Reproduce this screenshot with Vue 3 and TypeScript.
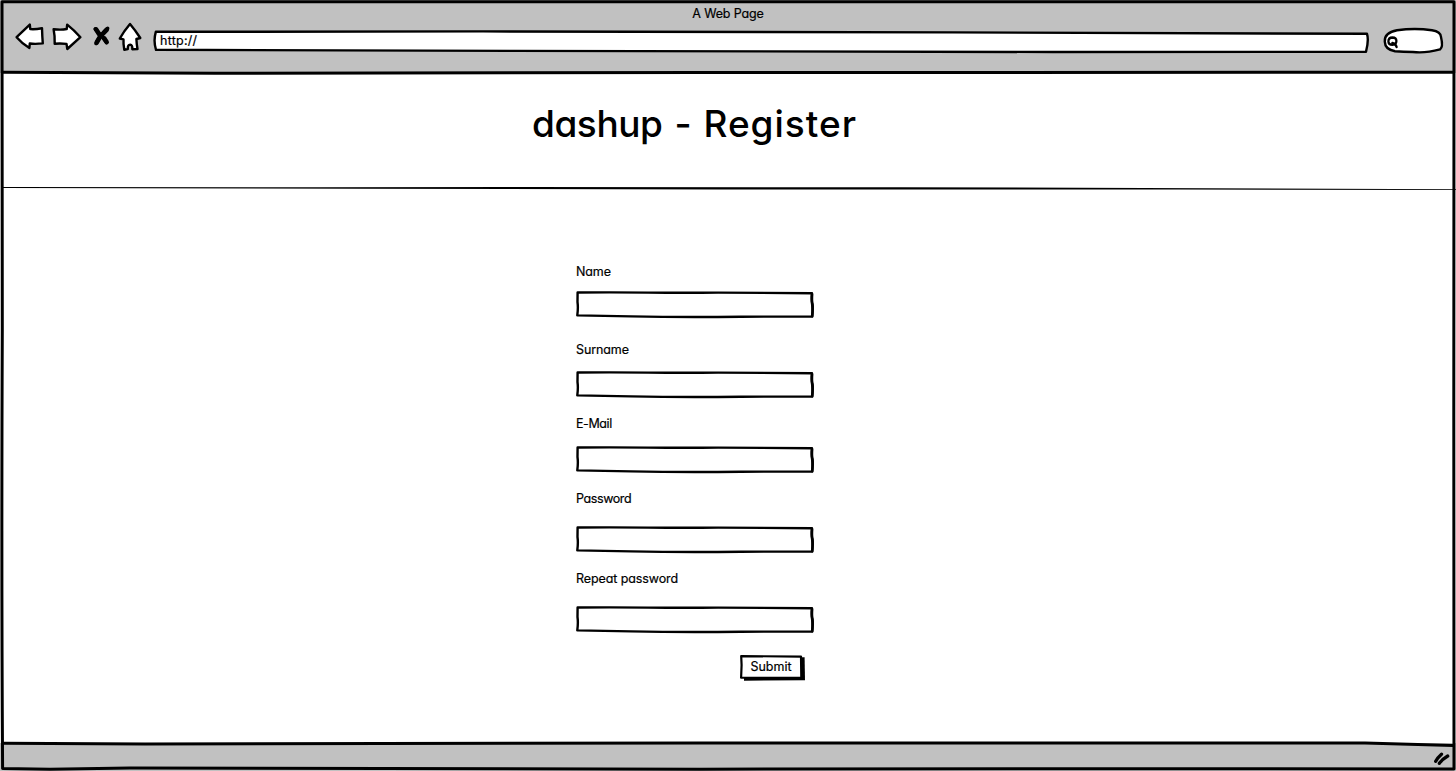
<script setup lang="ts">
interface Field {
  id: string
  label: string
  type: string
}

const fields: Field[] = [
  { id: 'name', label: 'Name', type: 'text' },
  { id: 'surname', label: 'Surname', type: 'text' },
  { id: 'email', label: 'E-Mail', type: 'email' },
  { id: 'password', label: 'Password', type: 'password' },
  { id: 'repeat', label: 'Repeat password', type: 'password' },
]
</script>

<template>
  <div class="window">
    <header class="chrome">
      <div class="title"><span>A Web Page</span></div>
      <nav class="toolbar">
        <svg class="icon back" width="30" height="28" viewBox="0 0 30 28">
          <path d="M1.6 14.2 L14.8 1.6 L15.3 6.1 Q20 6.6 27 5.2 Q27.2 13 27.8 20.4 Q20 21.2 14.8 20.5 L14.4 25 Q7 20.5 1.6 14.2 Z" />
        </svg>
        <svg class="icon forward" width="30" height="28" viewBox="0 0 30 28">
          <path d="M1.6 6.2 Q9 7.2 14.7 6 L15.2 1.6 Q22 7 28.4 14.2 L15.3 26 L14.5 20.9 Q8 20.3 2.7 20.8 Q3 13 1.6 6.2 Z" />
        </svg>
        <svg class="icon stop" width="20" height="22" viewBox="0 0 20 22">
          <path d="M3.2 4 Q8 9 14.8 17.6 M15.6 3.3 Q9 9 4 18.5" />
          <path class="thick" d="M4 4.3 L7 9 M14.8 4.6 L10.7 9 M7.3 13 L4.7 17.5 M12.2 13.3 L14.6 17" />
        </svg>
        <svg class="icon home" width="24" height="30" viewBox="0 0 24 30">
          <path d="M12 2 Q17.5 8.5 22.3 16 L18.4 17 Q18.6 22 19.5 27 L14.3 27.3 Q14.6 22.8 12.2 22.6 Q9.5 22.8 9.8 27 L6.3 27.8 Q5.2 22 5.5 17.3 L1.8 16.5 Q6 9 12 2 Z" />
        </svg>
        <div class="address">
          <svg class="sketch" width="1216" height="24" viewBox="0 0 1216 24">
            <path d="M2.8 1.8 L330 1.4 L800 2.4 L1214 3.8 Q1216 10 1213 21.8 L900 22 L360 20.9 L3 19.8 Q.2 11 2.8 1.8 Z" />
          </svg>
          <span>http://</span>
        </div>
        <div class="search">
          <svg width="62" height="27" viewBox="0 0 62 27">
            <path d="M1.8 14.6 Q1.2 5.6 14 3.3 Q32 .8 49 3.3 Q57.7 4.7 58 10 Q60.4 20 57 22.4 Q42 26.5 30 25 Q20 24.6 12 24.2 Q2 22.5 1.8 14.6 Z" />
            <path class="lens" d="M5.4 14.4 Q5.4 10.6 9.4 10.5 Q13.4 10.6 13.4 14 Q13.3 17.8 9.5 17.8 Q5.5 17.8 5.4 14.4 Z M9.4 15.8 Q12.9 16.6 13.6 20" />
          </svg>
        </div>
      </nav>
    </header>

    <section class="hero">
      <h1><span class="brand">dashup</span> - <span class="page">Register</span></h1>
    </section>

    <main class="content">
      <form class="form" @submit.prevent>
        <template v-for="field in fields" :key="field.id">
          <label :class="['label', field.id]" :for="field.id">{{ field.label }}</label>
          <div class="box">
            <svg class="sketch" width="240" height="28" viewBox="0 0 240 28">
              <path d="M1.6 1.5 Q40 1.2 72 1.6 Q110 2 142 1.6 L236 2.2 Q235.2 8 236.2 14 Q236.8 20 236.2 25.5 L165 25.7 Q108 26.4 55 25.4 L1.3 24.4 Q2.3 17 1.5 11 Z" />
              <path class="accent" d="M236.1 3.4 Q235.6 10 236.5 13 Q237 17 236.2 25.2" />
            </svg>
            <input :id="field.id" :type="field.type" />
          </div>
        </template>
        <button class="submit" type="submit">
          <svg class="sketch" width="66" height="27" viewBox="0 0 66 27">
            <path class="shadow" d="M4 3 L64.6 2.3 L65 25.2 L4 25.8 Z" />
            <path class="face" d="M1.2 1.1 L61 1.6 L61.3 22.8 L1.1 22.7 L1.6 10 Z" />
          </svg>
          <span>Submit</span>
        </button>
      </form>
    </main>

    <footer class="status">
      <svg width="20" height="16" viewBox="0 0 20 16">
        <path d="M2.7 11.3 Q4.7 7.5 8.5 4.2 M6.4 13.3 Q9.2 9.2 14.7 6" />
      </svg>
    </footer>

    <svg class="frame" width="1456" height="771" viewBox="0 0 1456 771">
      <path d="M2 1.8 L1454 1.8 Q1453.2 200 1453.8 420 L1454 769 L1100 768.7 L700 769.2 L130 768 L50 769.2 L2.6 768.5 Q1.3 570 2.3 330 Z" />
      <path d="M3 72.2 L215 73.3 L700 72.5 L1453 72.3" />
      <path d="M3 743.2 L145 744 L700 743 L1365 743 L1453 745.6" />
      <path class="divider" d="M3 187.1 L320 187.2 L520 187 L900 187.2 L1456 189.2 L1456 190 L1180 189.5 L720 189.5 L360 188.8 L3 188 Z" />
    </svg>
  </div>
</template>

<style>
html,
body {
  margin: 0;
  background: #fff;
}
</style>

<style scoped>
.window {
  position: relative;
  box-sizing: border-box;
  display: grid;
  grid-template-rows: 73px 115px 555px 28px;
  width: 1456px;
  height: 771px;
  overflow: hidden;
  background: #fff;
  color: #000;
  font-family: Inter, 'Open Sans', sans-serif;
  font-feature-settings: 'cv11' 1, 'calt' 0;
  font-size: 12.5px;
  line-height: 16px;
  -webkit-text-stroke: 0.2px #000;
}
svg {
  display: block;
  flex: none;
  overflow: visible;
}
path {
  fill: none;
  stroke: #000;
  stroke-width: 2.4;
  stroke-linejoin: round;
  stroke-linecap: round;
}
.frame {
  position: absolute;
  inset: 0;
  pointer-events: none;
}
.frame path {
  stroke-width: 3;
}
.frame .divider {
  fill: #000;
  stroke: none;
}
.sketch {
  position: absolute;
  left: 0;
  top: 0;
}
.chrome,
.status {
  background: #c1c1c1;
}
.title {
  height: 23px;
  padding: 6px 0 0;
  box-sizing: border-box;
  text-align: center;
  letter-spacing: -0.15px;
}
.toolbar {
  display: flex;
  align-items: flex-start;
  padding-left: 15px;
}
.icon path {
  fill: #fff;
}
.icon.forward {
  margin-left: 7px;
}
.icon.stop {
  margin: 2px 0 0 10px;
}
.icon.stop path {
  fill: none;
  stroke-width: 3.6;
}
.icon.stop .thick {
  stroke-width: 4.6;
}
.icon.home {
  margin: -1px 0 0 6px;
}
.address {
  position: relative;
  width: 1216px;
  height: 24px;
  margin: 7px 0 0 11px;
}
.address path,
.search path {
  fill: #fff;
}
.address span {
  position: relative;
  display: block;
  padding: 3px 0 0 7px;
  letter-spacing: 0.25px;
}
.search {
  margin: 4px 0 0 14px;
}
.search .lens {
  fill: none;
  stroke-width: 2.3;
}
.hero {
  display: flex;
  justify-content: center;
  padding: 26px 67px 0 0;
}
h1 {
  margin: 0;
  font-size: 37px;
  font-weight: 500;
  line-height: 50px;
  letter-spacing: 0;
  word-spacing: 2px;
  white-space: pre;
  -webkit-text-stroke: 0;
}
.brand {
  letter-spacing: -0.4px;
}
.page {
  letter-spacing: 1px;
}
.form {
  display: grid;
  grid-template-rows: 27px 51px 29px 45px 30px 45px 35px 45px 35px 49px 27px;
  width: 240px;
  margin: 76px 0 0 576px;
}
.label {
  letter-spacing: -0.1px;
}
.label.email,
.label.password {
  letter-spacing: -0.4px;
}
.box {
  position: relative;
  width: 240px;
  height: 28px;
}
.box input {
  position: relative;
  box-sizing: border-box;
  width: 236px;
  height: 26px;
  padding: 4px 8px;
  border: 0;
  outline: 0;
  background: transparent;
  font: inherit;
}
.box .accent {
  stroke-width: 2.6;
}
.submit {
  position: relative;
  width: 66px;
  height: 27px;
  margin-left: 164px;
  padding: 0 4px 4px 0;
  border: 0;
  background: none;
  color: inherit;
  font: inherit;
  font-feature-settings: inherit;
}
.submit span {
  position: relative;
}
.submit .shadow {
  fill: #000;
  stroke: none;
}
.submit .face {
  fill: #fff;
  stroke-width: 2.2;
}
.status {
  display: flex;
  justify-content: flex-end;
  padding: 7px 3px 0 0;
}
.status path {
  stroke-width: 3.3;
}
</style>
